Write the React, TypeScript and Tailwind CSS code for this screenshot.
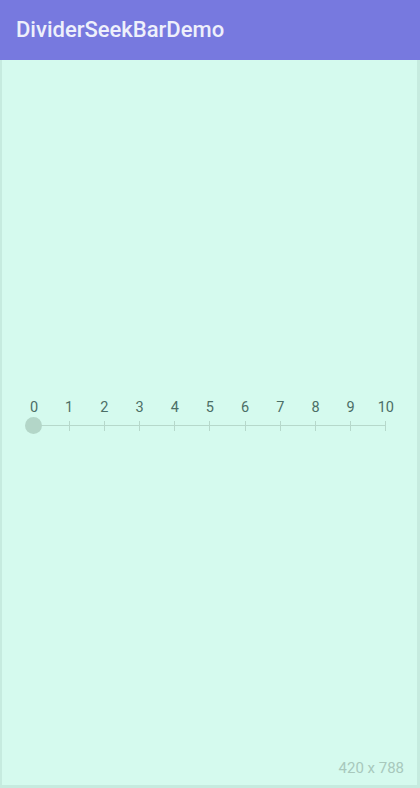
import React from 'react';

const steps = [0, 1, 2, 3, 4, 5, 6, 7, 8, 9, 10];

const DividerSeekBar: React.FC<{ value: number }> = ({ value }) => {
  const pct = (value / 10) * 100;
  return (
    <div className="w-full">
      <div className="flex justify-between">
        {steps.map((s) => (
          <div key={s} className="w-0 flex justify-center">
            <span className="text-[14.5px] leading-[16px] text-[#4c6e66]">{s}</span>
          </div>
        ))}
      </div>
      <div className="relative mt-[5px] h-[10px]">
        <div className="absolute left-0 right-0 top-[4px] h-px bg-[#b6d8cb]" />
        <div className="absolute inset-0 flex justify-between">
          {steps.map((s) => (
            <div key={s} className="w-px h-[10px] bg-[#b6d8cb]" />
          ))}
        </div>
        <div
          className="absolute top-[-4px] w-[17px] h-[17px] -ml-[9px] rounded-full bg-[#b3d6c8]"
          style={{ left: `${pct}%` }}
        />
      </div>
    </div>
  );
}

export default function App() {
  return (
    <div
      className="w-[420px] h-[788px] flex flex-col bg-[#d5faee]"
      style={{ fontFamily: 'Roboto, "Liberation Sans", sans-serif' }}
    >
      <div className="h-[60px] shrink-0 bg-[#7779df] flex items-center px-[16px] pb-[1px]">
        <span className="text-[22px] font-medium text-[#eef0fb]">DividerSeekBarDemo</span>
      </div>
      <div className="flex-1 flex flex-col border-l-2 border-r-[3px] border-b-[3px] border-[#c6ebdf]">
        <div className="pt-[340px] pl-[32px] pr-[31px]">
          <DividerSeekBar value={0} />
        </div>
        <div className="mt-auto flex justify-end pr-[13px] pb-[6px]">
          <span className="text-[15px] text-[#a8c8bc]">420 x 788</span>
        </div>
      </div>
    </div>
  );
}
